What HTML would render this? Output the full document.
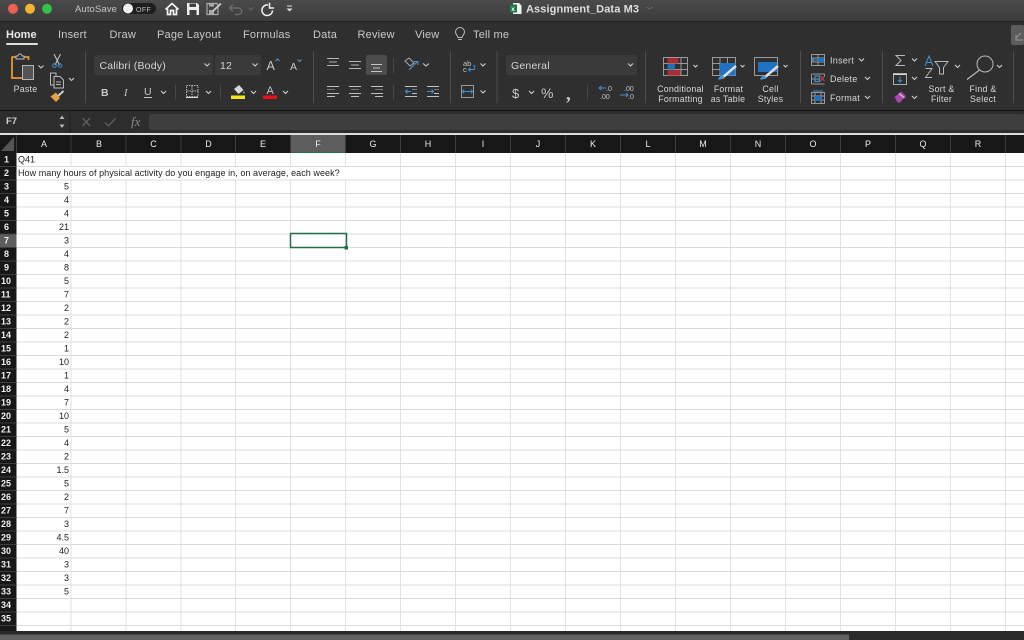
<!DOCTYPE html>
<html><head><meta charset="utf-8"><title>Assignment_Data M3</title>
<style>
html,body{margin:0;padding:0;background:#fff;width:1024px;height:640px;overflow:hidden}
svg{display:block}
text{font-family:"Liberation Sans",sans-serif}
.t{font-size:11px;fill:#c9c9c9;letter-spacing:.2px}
.r{font-size:10.5px;fill:#d4d4d4;letter-spacing:.2px}
.s{font-size:8.8px;fill:#d8d8d8;letter-spacing:.25px}
.c{text-anchor:middle}
.h{font-size:9px;fill:#ececec;text-anchor:middle}
.n{font-size:9px;fill:#eeeeee;font-weight:bold}
.v{font-size:9px;fill:#222;text-anchor:end}
.x{font-size:9px;fill:#222}
.i{fill:none;stroke:#bdbdbd;stroke-width:1}
.ch{fill:none;stroke:#d0d0d0;stroke-width:1.1}
.blue{fill:#1f73c4}
</style></head><body>
<svg width="1024" height="640" viewBox="0 0 1024 640" xmlns="http://www.w3.org/2000/svg">
<defs><linearGradient id="tb" x1="0" y1="0" x2="0" y2="1"><stop offset="0" stop-color="#4a4a4a"/><stop offset="1" stop-color="#3b3b3b"/></linearGradient></defs>
<!-- title bar -->
<rect width="1024" height="22" fill="url(#tb)"/>
<rect y="21" width="1024" height="1" fill="#222"/>
<rect y="22" width="1024" height="88" fill="#2f2f2f"/>
<circle cx="13" cy="8.700" r="5" fill="#ee5f58"/><circle cx="30" cy="8.700" r="5" fill="#f6b32f"/><circle cx="47" cy="8.700" r="5" fill="#35c04a"/>
<text x="75" y="12" style="font-size:9.5px;letter-spacing:.1px" fill="#c6c6c6">AutoSave</text>
<rect x="122" y="3" width="34" height="11" rx="5.5" fill="#1e1e1e"/><circle cx="128" cy="8.500" r="5" fill="#f2f2f2"/>
<text x="136" y="12" style="font-size:7px;letter-spacing:.4px" fill="#bbb">OFF</text>
<!-- home -->
<path d="M165.500 9.500 172 3.500 178.500 9.500M167.500 8.500V14.500H170.500V10.500H173.500V14.500H176.500V8.500" fill="none" stroke="#f2f2f2" stroke-width="1.700"/>
<!-- save -->
<path d="M187 3H197L199 5V15H187Z" fill="#ededed"/><rect x="189.500" y="3.500" width="6.500" height="3.500" fill="#3f3f3f"/><rect x="189.500" y="10" width="7" height="5" fill="#3f3f3f"/>
<!-- edit save -->
<path d="M207 3.500H217L218 5V14.500H207Z" fill="none" stroke="#aaa" stroke-width="1.200"/><rect x="209" y="10" width="5" height="4" fill="#aaa"/><rect x="209" y="4" width="5" height="2.500" fill="#aaa"/><path d="M213 11 221 3.500" stroke="#ccc" stroke-width="1.800"/>
<!-- undo/redo -->
<path d="M233 4.500 229.500 8 233 11.500M230 8H238.500A3.200 3.200 0 0 1 238.500 14.500H235" fill="none" stroke="#6b6b6b" stroke-width="1.400"/>
<path d="M248.500 7.500 251 10 253.500 7.500" fill="none" stroke="#666" stroke-width="1"/>
<path d="M268 5A5.300 5.300 0 1 0 272.500 10.500M269.500 2.800V8H274" fill="none" stroke="#f0f0f0" stroke-width="1.500"/>
<path d="M287 6H292" stroke="#ddd" stroke-width="1"/><path d="M286.500 8.500H292.500L289.500 11.500Z" fill="#ddd"/>
<!-- title -->
<path d="M513 3H519L521.500 5.500V14H513Z" fill="#f2f2f2"/><rect x="510" y="4.500" width="7" height="8" fill="#1f7a45"/><text x="511.300" y="11" style="font-size:6.500px;font-weight:bold" fill="#fff">x</text>
<text x="526" y="12.500" style="font-size:11px;font-weight:bold;letter-spacing:.1px" fill="#dedede">Assignment_Data M3</text>
<path d="M646.500 7 649.500 9 652.500 7" fill="none" stroke="#6a6a6a"/>
<!-- tabs -->
<text x="6" y="38" class="t" style="font-weight:bold;fill:#e8e8e8;letter-spacing:0">Home</text>
<rect x="6" y="43" width="32" height="2" rx="1" fill="#ddd"/>
<text x="58" y="38" class="t">Insert</text><text x="109.500" y="38" class="t">Draw</text><text x="157" y="38" class="t">Page Layout</text><text x="243" y="38" class="t">Formulas</text><text x="313" y="38" class="t">Data</text><text x="357.500" y="38" class="t">Review</text><text x="415" y="38" class="t">View</text>
<path d="M458 37.500C457.500 35 455.500 34.500 455.500 32A4.500 4.500 0 0 1 464.500 32C464.500 34.500 462.500 35 462 37.500ZM458 39.500H462" fill="none" stroke="#bdbdbd"/>
<text x="473" y="38" class="t">Tell me</text>
<rect x="1011" y="25" width="13" height="20" rx="2" fill="#5c5c5c"/><path d="M1021 33 1016 38M1016 35V40H1023" fill="none" stroke="#999"/>
<!-- separators -->
<path d="M85.500 51V103M313.500 51V103M450.500 51V103M497 51V103M645.500 51V103M800.500 51V103M882.500 51V103M1013.500 51V103" stroke="#4d4d4d"/>
<path d="M175.500 85V100M220.500 85V100M393.500 58V73M393.500 85V100M587.500 85V100" stroke="#484848"/>
<!-- paste -->
<path d="M12 57H16M24 57H28.500V60" fill="none" stroke="#e49a34" stroke-width="1.800"/><path d="M12 56.500V78H22" fill="none" stroke="#e49a34" stroke-width="1.800"/>
<path d="M16 59V56H18A2 2 0 0 1 22 56H24V59Z" fill="#2f2f2f" stroke="#bbb"/>
<rect x="22.500" y="65.500" width="11" height="14" fill="#555" stroke="#b5b5b5"/>
<path d="M38.500 65.500 41 68 43.500 65.500" class="ch"/>
<text x="25.500" y="92" class="s c">Paste</text>
<!-- scissors -->
<path d="M54 54 59.500 65M60.500 54 55 65" stroke="#ccc" fill="none"/><circle cx="54.500" cy="65.500" r="1.800" fill="none" stroke="#3f92d8"/><circle cx="60" cy="65.500" r="1.800" fill="none" stroke="#3f92d8"/>
<!-- copy -->
<path d="M50.500 73H56V85H50.500Z" fill="none" stroke="#bbb"/><path d="M54 76.500H60L63.500 80V88H54Z" fill="#2f2f2f" stroke="#bbb"/><path d="M56 82H61M56 84.500H61" stroke="#bbb"/>
<path d="M69 78 71.500 80.500 74 78" class="ch"/>
<!-- format painter -->
<path d="M50.500 96.500 56 92.500 60 98 56 102Z" fill="#e8a33d"/><path d="M58 96 63.500 91" stroke="#ccc" stroke-width="2"/>
<!-- font boxes -->
<rect x="94" y="55" width="119" height="20" rx="2" fill="#3a3a3a"/><rect x="215" y="55" width="46" height="20" rx="2" fill="#3a3a3a"/>
<text x="99.500" y="69" class="r">Calibri (Body)</text><text x="220" y="69" class="r">12</text>
<path d="M204.500 63.500 207 66 209.500 63.500M252.500 63.500 255 66 257.500 63.500" class="ch"/>
<text x="266.500" y="70" style="font-size:12.500px" fill="#c8c8c8">A</text><path d="M275.500 61 277.500 59 279.500 61" fill="none" stroke="#4b9bdc"/>
<text x="290" y="70" style="font-size:10.500px" fill="#c8c8c8">A</text><path d="M297.500 59.500 299.500 61.500 301.500 59.500" fill="none" stroke="#4b9bdc"/>
<text x="101" y="96" style="font-size:10.500px;font-weight:bold" fill="#c8c8c8">B</text>
<text x="124" y="96" style="font-size:10.500px;font-style:italic;font-family:'Liberation Serif'" fill="#c8c8c8">I</text>
<text x="144" y="95" style="font-size:10.500px" fill="#c8c8c8">U</text><path d="M144 97.500H152" stroke="#c8c8c8"/>
<path d="M161 91 163.500 93.500 166 91M206 91 208.500 93.500 211 91M251 91 253.500 93.500 256 91M283 91 285.500 93.500 288 91" class="ch"/>
<rect x="186.500" y="85.500" width="11.500" height="11" fill="none" stroke="#bbb" stroke-dasharray="1.500 1"/><path d="M186 97.500H198" stroke="#ddd"/><path d="M192 86V96M187 91H198" stroke="#bbb" stroke-dasharray="1.500 1"/>
<path d="M234 89 239 85 243.500 90 238.500 94Z" fill="#d8d8d8"/><circle cx="244" cy="92.500" r="1" fill="#4b9bdc"/>
<rect x="231" y="95.500" width="14" height="3.500" fill="#f5e71f"/>
<text x="266.500" y="94" style="font-size:11px" fill="#c8c8c8">A</text><rect x="263" y="95.500" width="14" height="3.500" fill="#e8121b"/>
<!-- alignment -->
<path d="M327 58.500H339M329 62H337M327 65.500H339" stroke="#b5b5b5"/><path d="M349 61.500H361M351 65H359M349 68.500H361" stroke="#b5b5b5"/>
<rect x="366" y="55" width="21" height="20" rx="2" fill="#4c4c4c"/><path d="M371 64.500H382M373 68H380M371 71.500H382" stroke="#c4c4c4"/>
<path d="M327 86.500H339M327 93.500H339M327 96.500H335" stroke="#c0c0c0"/><path d="M327 89.500H335" stroke="#777"/>
<path d="M349 86.500H361M349 93.500H361M351 96.500H359" stroke="#c0c0c0"/><path d="M351 89.500H359" stroke="#777"/>
<path d="M371 86.500H383M371 93.500H383M375 96.500H383" stroke="#c0c0c0"/><path d="M375 89.500H383" stroke="#777"/>
<!-- orientation -->
<path d="M405 61 410 66 414 63 409 58Z" fill="none" stroke="#aaa"/><path d="M409 70 417 62" stroke="#3f92d8" stroke-width="1.200"/><path d="M414 61.500H418V65" fill="none" stroke="#3f92d8"/>
<path d="M423 63.500 426 66 429 63.500" class="ch"/>
<path d="M405 86.500H417M405 96.500H417M412 93.500H417" stroke="#c0c0c0"/><path d="M412 89.500H417" stroke="#777"/><path d="M411 91.500H405.500M407.500 89.500 405.500 91.500 407.500 93.500" fill="none" stroke="#3f92d8"/>
<path d="M427 86.500H439M427 96.500H439M434 93.500H439" stroke="#c0c0c0"/><path d="M434 89.500H439" stroke="#777"/><path d="M427 91.500H433.500M431.500 89.500 433.500 91.500 431.500 93.500" fill="none" stroke="#3f92d8"/>
<!-- wrap / merge -->
<text x="463" y="66" style="font-size:7.500px" fill="#c6c6c6">ab</text><text x="463" y="72" style="font-size:7.500px" fill="#c6c6c6">c</text><path d="M468.500 69.500H473C475.500 69.500 475.500 65.500 473 65.500M470.500 67.500 468.500 69.500 470.500 71.500" fill="none" stroke="#3f92d8"/>
<path d="M480.500 63.500 483 66 485.500 63.500M480.500 90.500 483 93 485.500 90.500" class="ch"/>
<rect x="461.500" y="85.500" width="12" height="12" fill="none" stroke="#999"/><path d="M462 91.500H473M464 89.500 462.500 91.500 464 93.500M471 89.500 472.500 91.500 471 93.500" fill="none" stroke="#3f92d8"/>
<!-- number -->
<rect x="506" y="55" width="131" height="20" rx="2" fill="#3a3a3a"/><text x="511" y="69" class="r">General</text>
<path d="M628 63.500 630.500 66 633 63.500" class="ch"/>
<text x="512" y="98" style="font-size:13px" fill="#c8c8c8">$</text><path d="M529 91 531.500 93.500 534 91" class="ch"/>
<text x="541" y="98" style="font-size:14px" fill="#c8c8c8">%</text><text x="566" y="100" style="font-size:19px;font-weight:bold;font-family:'Liberation Serif'" fill="#c8c8c8">,</text>
<text x="606" y="91" style="font-size:7px" fill="#c8c8c8">.0</text><text x="600" y="99" style="font-size:7px" fill="#c8c8c8">.00</text><path d="M599 88H606M601.500 86 599 88 601.500 90" fill="none" stroke="#3f92d8"/>
<text x="624" y="91" style="font-size:7px" fill="#c8c8c8">.00</text><text x="628" y="99" style="font-size:7px" fill="#c8c8c8">.0</text><path d="M620 95H628M626 93 628 95 626 97" fill="none" stroke="#3f92d8"/>
<!-- conditional formatting -->
<rect x="663.500" y="57.500" width="24" height="18" fill="none" stroke="#9a9a9a"/><path d="M663.500 63.500H687.500M663.500 69.500H687.500M669.500 57.500V75.500M681 57.500V75.500" stroke="#9a9a9a"/>
<rect x="667.500" y="58" width="11" height="5.500" fill="#a82e33"/><rect x="667.500" y="64" width="7.500" height="5.500" fill="#1f6fb5"/><rect x="667.500" y="70" width="13" height="5.500" fill="#a82e33"/>
<path d="M693.500 65 695.500 67 697.500 65M740.500 65 742.500 67 744.500 65M783.500 65 785.500 67 787.500 65" class="ch"/>
<text x="680.500" y="92" class="s c">Conditional</text><text x="680.500" y="102" class="s c">Formatting</text><text x="728.500" y="92" class="s c">Format</text><text x="728" y="102" class="s c">as Table</text><text x="770.500" y="92" class="s c">Cell</text><text x="770.500" y="102" class="s c">Styles</text>
<!-- format as table -->
<rect x="712.500" y="57.500" width="23" height="18" fill="none" stroke="#9a9a9a"/><path d="M712.500 63.500H735.500M712.500 69.500H735.500M720 57.500V75.500M727.500 57.500V75.500" stroke="#9a9a9a"/>
<path d="M720 63H735.500V75.500H720Z" fill="#1f73c4"/><path d="M722 78 736 66" stroke="#ddd" stroke-width="2.500"/><path d="M718 79.500C719 76 722 74.500 724 76.500 724 78.500 721 80 718 79.500Z" fill="#3f92d8"/>
<!-- cell styles -->
<rect x="754.500" y="57.500" width="23" height="18" fill="none" stroke="#9a9a9a"/><rect x="758" y="62" width="19" height="10" fill="#1f73c4"/><path d="M764 78 778 66" stroke="#ddd" stroke-width="2.500"/><path d="M760 79.500C761 76 764 74.500 766 76.500 766 78.500 763 80 760 79.500Z" fill="#3f92d8"/>
<!-- cells -->
<rect x="811.500" y="54.500" width="13" height="11" fill="none" stroke="#999"/><path d="M811.500 58H824.500M811.500 62H824.500M818 54.500V65.500" stroke="#999"/><rect x="818" y="58" width="6" height="4" class="blue"/><path d="M812 60H818M814 58 812 60 814 62" fill="none" stroke="#3f92d8"/>
<text x="830" y="63.500" class="s" style="font-size:9px">Insert</text><path d="M859 58.500 861.500 61 864 58.500M865 77 867.500 79.500 870 77M865 96 867.500 98.500 870 96" class="ch"/>
<path d="M811.500 74H824.500M811.500 84H824.500M811.500 74V84M824.500 74V77M811.500 79H820" fill="none" stroke="#999"/><rect x="815" y="76" width="4.500" height="5.500" fill="none" stroke="#3f92d8" stroke-width="1.200"/><path d="M820.500 76 824.500 81M824.500 76 820.500 81" stroke="#e2443d"/>
<text x="830" y="82" class="s" style="font-size:9px">Delete</text>
<rect x="811.500" y="92.500" width="13" height="11" fill="none" stroke="#999"/><path d="M811.500 96H824.500M811.500 100H824.500M815 92.500V103.500M821 92.500V103.500" stroke="#999"/><rect x="815" y="96" width="6" height="5" class="blue"/><path d="M813 91H823" stroke="#3f92d8"/>
<text x="830" y="101" class="s" style="font-size:9px">Format</text>
<!-- editing -->
<path d="M905 55.500H896L901 60.500 896 65.500H905" fill="none" stroke="#b8b8b8"/><path d="M912 58.500 914.500 61 917 58.500M912 77 914.500 79.500 917 77M912 96 914.500 98.500 917 96M955 65 957.500 67.500 960 65M997 65 999.500 67.500 1002 65" class="ch"/>
<rect x="893.500" y="73.500" width="13" height="11" fill="none" stroke="#aaa"/><path d="M893.500 74.500H906.500" stroke="#ddd"/><path d="M900 76.500V82M898 80 900 82 902 80" fill="none" stroke="#3f92d8"/>
<path d="M894.500 97 901 91.500 906 96 900 102.500 897.500 102.500Z" fill="#a947ad"/><path d="M899 93.500 904.500 98" stroke="#ddd"/>
<path d="M925 66 929 56 933 66M926.500 62.500H931.500" fill="none" stroke="#3f92d8"/>
<path d="M925.500 68.500H932L925.500 77.500H932" fill="none" stroke="#b8b8b8"/>
<path d="M935 61.500H948L943.500 67.500V74H939.500V67.500Z" fill="none" stroke="#b8b8b8"/>
<circle cx="985" cy="64" r="8" fill="none" stroke="#b8b8b8"/><path d="M979.500 70 967 79.500" stroke="#b8b8b8" stroke-width="1.300"/>
<text x="941.500" y="92" class="s c">Sort &amp;</text><text x="941.500" y="102" class="s c">Filter</text><text x="983" y="92" class="s c">Find &amp;</text><text x="983" y="102" class="s c">Select</text>
<!-- formula bar -->
<rect y="110" width="1024" height="1" fill="#111"/>
<rect y="111" width="1024" height="22" fill="#2d2d2d"/>
<rect x="149" y="114" width="875" height="16" rx="2" fill="#3e3e3e"/>
<rect x="69" y="111" width="2" height="22" fill="#262626"/>
<text x="6" y="124" style="font-size:9.500px;font-weight:bold" fill="#cfcfcf">F7</text>
<path d="M59.500 119 62 115.500 64.500 119ZM59.500 124.500 62 128 64.500 124.500Z" fill="#b5b5b5"/>
<path d="M82.500 118 90 126M90 118 82.500 126" stroke="#5e5e5e" stroke-width="1.300"/><path d="M105 122.500 108.500 126 115.500 118.500" fill="none" stroke="#5e5e5e" stroke-width="1.300"/>
<text x="131" y="126" style="font-size:13px;font-style:italic;font-family:'Liberation Serif'" fill="#8a8a8a">fx</text>
<rect y="133" width="1024" height="2" fill="#dedede"/>
<!-- column header -->
<rect y="135" width="1024" height="18" fill="#171717"/>
<rect x="290.500" y="135" width="55" height="18" fill="#5d5d5d"/>
<rect x="290.500" y="152" width="55" height="1.500" fill="#1f7048"/>
<path d="M14 137V151H1Z" fill="#555"/>
<path d="M16.500 135V153M71 135V153M126 135V153M181 135V153M235.500 135V153M290.500 135V153M345.500 135V153M400.500 135V153M455.500 135V153M510.500 135V153M565.500 135V153M620.500 135V153M675.500 135V153M730.500 135V153M785.500 135V153M840.500 135V153M895.500 135V153M950.500 135V153M1005.500 135V153" stroke="#3a3a3a"/>
<text x="44" y="147" class="h">A</text><text x="99" y="147" class="h">B</text><text x="153.500" y="147" class="h">C</text><text x="208.500" y="147" class="h">D</text><text x="263" y="147" class="h">E</text><text x="318" y="147" class="h">F</text><text x="373" y="147" class="h">G</text><text x="428" y="147" class="h">H</text><text x="483" y="147" class="h">I</text><text x="538" y="147" class="h">J</text><text x="593" y="147" class="h">K</text><text x="648" y="147" class="h">L</text><text x="703" y="147" class="h">M</text><text x="758" y="147" class="h">N</text><text x="813" y="147" class="h">O</text><text x="868" y="147" class="h">P</text><text x="923" y="147" class="h">Q</text><text x="978" y="147" class="h">R</text>
<!-- sheet -->
<rect x="16" y="153" width="1008" height="478" fill="#fff"/>
<path d="M71 153V631M126 153V631M181 153V631M235.500 153V631M290.500 153V631M345.500 153V631M400.500 153V631M455.500 153V631M510.500 153V631M565.500 153V631M620.500 153V631M675.500 153V631M730.500 153V631M785.500 153V631M840.500 153V631M895.500 153V631M950.500 153V631M1005.500 153V631" stroke="#e2e2e2"/>
<path d="M16 166.500H1024M16 180H1024M16 193.500H1024M16 207H1024M16 220.500H1024M16 234H1024M16 247.500H1024M16 261H1024M16 274.500H1024M16 288H1024M16 301.500H1024M16 315H1024M16 328.500H1024M16 342H1024M16 355.500H1024M16 369H1024M16 382.500H1024M16 396H1024M16 409.500H1024M16 423H1024M16 436.500H1024M16 450H1024M16 463.500H1024M16 477H1024M16 490.500H1024M16 504H1024M16 517.500H1024M16 531H1024M16 544.500H1024M16 558H1024M16 571.500H1024M16 585H1024M16 598.500H1024M16 612H1024M16 625.500H1024" stroke="#dcdcdc"/>
<!-- row headers -->
<rect y="153" width="16.500" height="478" fill="#171717"/>
<rect y="234" width="16.500" height="13.500" fill="#5d5d5d"/>
<path d="M0 166.500H16M0 180H16M0 193.500H16M0 207H16M0 220.500H16M0 234H16M0 247.500H16M0 261H16M0 274.500H16M0 288H16M0 301.500H16M0 315H16M0 328.500H16M0 342H16M0 355.500H16M0 369H16M0 382.500H16M0 396H16M0 409.500H16M0 423H16M0 436.500H16M0 450H16M0 463.500H16M0 477H16M0 490.500H16M0 504H16M0 517.500H16M0 531H16M0 544.500H16M0 558H16M0 571.500H16M0 585H16M0 598.500H16M0 612H16M0 625.500H16" stroke="#3d3d3d"/>
<text class="n" x="4" y="162.500">1</text><text class="n" x="4" y="176">2</text><text class="n" x="4" y="189.500">3</text><text class="n" x="4" y="203">4</text><text class="n" x="4" y="216.500">5</text><text class="n" x="4" y="230">6</text><text class="n" x="4" y="243.500">7</text><text class="n" x="4" y="257">8</text><text class="n" x="4" y="270.500">9</text>
<text class="n" x="1" y="284">10</text><text class="n" x="1" y="297.500">11</text><text class="n" x="1" y="311">12</text><text class="n" x="1" y="324.500">13</text><text class="n" x="1" y="338">14</text><text class="n" x="1" y="351.500">15</text><text class="n" x="1" y="365">16</text><text class="n" x="1" y="378.500">17</text><text class="n" x="1" y="392">18</text><text class="n" x="1" y="405.500">19</text><text class="n" x="1" y="419">20</text><text class="n" x="1" y="432.500">21</text><text class="n" x="1" y="446">22</text><text class="n" x="1" y="459.500">23</text><text class="n" x="1" y="473">24</text><text class="n" x="1" y="486.500">25</text><text class="n" x="1" y="500">26</text><text class="n" x="1" y="513.500">27</text><text class="n" x="1" y="527">28</text><text class="n" x="1" y="540.500">29</text><text class="n" x="1" y="554">30</text><text class="n" x="1" y="567.500">31</text><text class="n" x="1" y="581">32</text><text class="n" x="1" y="594.500">33</text><text class="n" x="1" y="608">34</text><text class="n" x="1" y="621.500">35</text>
<!-- cells -->
<rect x="17" y="167" width="329" height="12.500" fill="#fff"/>
<text class="x" x="18" y="162.500">Q41</text>
<text class="x" x="18" y="176" style="letter-spacing:.06px">How many hours of physical activity do you engage in, on average, each week?</text>
<text class="v" x="69" y="189.500">5</text><text class="v" x="69" y="203">4</text><text class="v" x="69" y="216.500">4</text><text class="v" x="69" y="230">21</text><text class="v" x="69" y="243.500">3</text><text class="v" x="69" y="257">4</text><text class="v" x="69" y="270.500">8</text><text class="v" x="69" y="284">5</text><text class="v" x="69" y="297.500">7</text><text class="v" x="69" y="311">2</text><text class="v" x="69" y="324.500">2</text><text class="v" x="69" y="338">2</text><text class="v" x="69" y="351.500">1</text><text class="v" x="69" y="365">10</text><text class="v" x="69" y="378.500">1</text><text class="v" x="69" y="392">4</text><text class="v" x="69" y="405.500">7</text><text class="v" x="69" y="419">10</text><text class="v" x="69" y="432.500">5</text><text class="v" x="69" y="446">4</text><text class="v" x="69" y="459.500">2</text><text class="v" x="69" y="473">1.5</text><text class="v" x="69" y="486.500">5</text><text class="v" x="69" y="500">2</text><text class="v" x="69" y="513.500">7</text><text class="v" x="69" y="527">3</text><text class="v" x="69" y="540.500">4.5</text><text class="v" x="69" y="554">40</text><text class="v" x="69" y="567.500">3</text><text class="v" x="69" y="581">3</text><text class="v" x="69" y="594.500">5</text>
<!-- selection -->
<rect x="290.500" y="233.500" width="56" height="14" fill="none" stroke="#1f7048" stroke-width="1.500"/><rect x="344.500" y="246" width="3.500" height="3.500" fill="#1f7048"/>
<!-- bottom -->
<rect y="631" width="1024" height="9" fill="#2a2a2a"/>
<rect y="634.500" width="849" height="5.500" fill="#626262"/>
</svg>
</body></html>
